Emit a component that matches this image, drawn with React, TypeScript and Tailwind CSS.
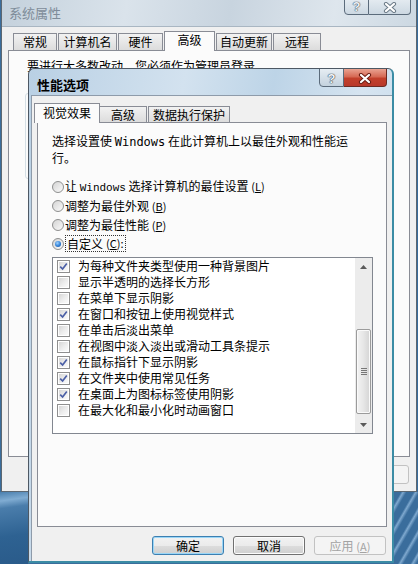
import React from "react";

const items: [string, boolean][] = [
  ["为每种文件夹类型使用一种背景图片", true],
  ["显示半透明的选择长方形", false],
  ["在菜单下显示阴影", false],
  ["在窗口和按钮上使用视觉样式", true],
  ["在单击后淡出菜单", false],
  ["在视图中淡入淡出或滑动工具条提示", false],
  ["在鼠标指针下显示阴影", true],
  ["在文件夹中使用常见任务", true],
  ["在桌面上为图标标签使用阴影", true],
  ["在最大化和最小化时动画窗口", false],
];

function Check({ checked }: { checked: boolean }) {
  return (
    <span className="w-[13px] h-[13px] border border-[#8f8f8f] bg-white p-[1px] flex shrink-0">
      <span className="flex-1 bg-[linear-gradient(135deg,#d6d6d6_0%,#ececec_50%,#fbfbfb_100%)] flex items-center justify-center">
        {checked && (
          <svg width="9" height="9" viewBox="0 0 9 9">
            <path d="M1.2 4.6 L3.6 7 L7.8 1.6" fill="none" stroke="#4b5fa6" strokeWidth="1.7" />
          </svg>
        )}
      </span>
    </span>
  );
}

function Radio({ on }: { on?: boolean }) {
  return (
    <span className="w-[12px] h-[12px] rounded-full border border-[#8e8f8f] bg-[linear-gradient(135deg,#d4d4d4,#fafafa)] flex items-center justify-center shrink-0">
      {on && (
        <span className="w-[6px] h-[6px] rounded-full bg-[radial-gradient(circle_at_40%_35%,#9fd3ff_0%,#2f7fd6_55%,#1b4f99_100%)]" />
      )}
    </span>
  );
}

function Btn({ label, def, disabled }: { label: React.ReactNode; def?: boolean; disabled?: boolean }) {
  return (
    <div
      className={
        "w-[72px] h-[19px] shrink-0 rounded-[3px] border flex items-center justify-center text-[12px] leading-none " +
        (disabled
          ? "border-[#c2c2c2] bg-[#f4f4f4] text-[#a3a3a3]"
          : def
          ? "border-[#3c7fb1] bg-[linear-gradient(#f2f2f2_0%,#ebebeb_50%,#dddddd_51%,#cfcfcf_100%)] shadow-[inset_0_0_0_1px_#9ad6f7] text-black"
          : "border-[#707070] bg-[linear-gradient(#f2f2f2_0%,#ebebeb_50%,#dddddd_51%,#cfcfcf_100%)] shadow-[inset_0_0_0_1px_#fcfcfc] text-black")
      }
    >
      {label}
    </div>
  );
}

function XGlyph({ stroke }: { stroke: string }) {
  return (
    <svg width="14" height="11" viewBox="0 0 14 11">
      <path d="M3 2 L11 9 M11 2 L3 9" stroke={stroke} strokeWidth="4.2" strokeLinecap="round" fill="none" />
      <path d="M3 2 L11 9 M11 2 L3 9" stroke="#ffffff" strokeWidth="2.2" strokeLinecap="round" fill="none" />
    </svg>
  );
}

function OuterWindow() {
  const tabs: [string, number, boolean][] = [
    ["常规", 44, false],
    ["计算机名", 59, false],
    ["硬件", 45, false],
    ["高级", 51, true],
    ["自动更新", 56, false],
    ["远程", 48, false],
  ];
  return (
    <div className="absolute left-[1px] top-0 w-[416px] h-[492px] overflow-hidden border border-t-0 border-[#5c6771] bg-[#f0f0f0] flex flex-col">
      <div className="h-[27px] shrink-0 bg-[linear-gradient(100deg,#c4d1dc_0%,#dae3eb_30%,#c8d4df_55%,#dee6ed_80%,#ccd8e2_100%)] pl-[7px] pt-[5px] text-[13px] leading-[16px] text-[#7e8c99] border-b border-[#a9b6c2]">
        系统属性
      </div>
      <div className="flex flex-col pl-[6px] pr-[6px] pt-[4px]">
        <div className="flex items-end h-[19px] ml-[5px] gap-[1px]">
          {tabs.map(([t, w, sel]) => (
            <div
              key={t}
              style={{ width: w }}
              className={
                "flex items-center justify-center text-[12px] leading-none border border-[#898c95] " +
                (sel
                  ? "h-[20px] mb-[-1px] border-b-0 bg-[#fbfbfb] relative z-10 pb-[3px]"
                  : "h-[17px] border-b-0 bg-[linear-gradient(#f2f2f2,#dcdcdc)]")
              }
            >
              {t}
            </div>
          ))}
        </div>
        <div className="h-[407px] shrink-0 border border-[#898c95] bg-[#fbfbfb] flex flex-col pl-[16px] pr-[16px] pt-[8px]">
          <div className="text-[12px] leading-[14px] pl-[2px]">要进行大多数改动，您必须作为管理员登录。</div>
          <div className="mt-[20px] h-[86px] rounded-[3px] border border-[#d5dfe5]" />
        </div>
        <div className="mt-[8px] flex justify-end gap-[8px] pr-[1px]">
          <Btn label="确定" />
          <Btn label="取消" />
          <Btn label="应用(A)" disabled />
        </div>
      </div>
      <div className="absolute right-[5px] top-[-4px] flex">
        <div className="w-[25px] h-[19px] rounded-bl-[4px] border border-[#5b6b7b] bg-[linear-gradient(#e8eef3,#ccd8e2)] flex items-center justify-center pt-[2px] text-[13px] font-bold font-['Liberation_Sans',sans-serif] text-[#e9eef2] [text-shadow:0_0_1px_#4b5966,0_0_1px_#4b5966,0_0_1px_#4b5966]">
          ?
        </div>
        <div className="w-[42px] h-[19px] rounded-br-[4px] border border-l-0 border-[#5b6b7b] bg-[linear-gradient(#e8eef3,#ccd8e2)] flex items-center justify-center pt-[3px]">
          <XGlyph stroke="#6c7b88" />
        </div>
      </div>
    </div>
  );
}

function InnerDialog() {
  return (
    <div className="absolute left-[28px] top-[68px] w-[366px] h-[495px] overflow-hidden rounded-t-[6px] border border-[#4d5864] border-r-[#3b8ca5] border-b-[#3b8ca5] border-r-2 border-b-2 bg-[linear-gradient(100deg,#b9d0e4_0%,#d3e2ef_35%,#bdd4e7_55%,#d6e4f0_75%,#c3d8ea_100%)] flex flex-col">
      <div className="h-[26px] shrink-0 pl-[8px] pt-[4px] flex items-center text-[13px] font-bold leading-none">
        性能选项
      </div>
      <div className="flex-1 ml-[2px] border-l border-t border-[#8e9baa] bg-[#f0f0f0] flex flex-col pl-[5px] pr-[5px] pt-[7px]">
        <div className="flex items-end h-[19px] shrink-0 ml-[-3px]">
          <div className="w-[66px] h-[20px] mb-[-1px] relative z-10 border border-b-0 border-[#898c95] bg-[#fbfbfb] flex items-center justify-center pb-[2px] text-[12px] leading-none">
            视觉效果
          </div>
          <div className="w-[47px] h-[16px] border border-l-0 border-b-0 border-[#898c95] bg-[linear-gradient(#f2f2f2,#dcdcdc)] flex items-center justify-center text-[12px] leading-none">
            高级
          </div>
          <div className="ml-[1px] w-[82px] h-[16px] border border-b-0 border-[#898c95] bg-[linear-gradient(#f2f2f2,#dcdcdc)] flex items-center justify-center text-[12px] leading-none">
            数据执行保护
          </div>
        </div>
        <div className="h-[405px] shrink-0 border border-[#898c95] bg-[#fbfbfb] flex flex-col pl-[14px] pr-[13px] pt-[10px]">
          <div className="text-[12px] leading-[15px]">
            选择设置使 <span className="font-['DejaVu_Sans_Mono',monospace] text-[12px]">Windows</span> 在此计算机上以最佳外观和性能运
            <br />
            行。
          </div>
          <div className="mt-[12px] flex flex-col text-[12px]">
            <div className="h-[19px] flex items-center gap-[1px]">
              <Radio />
              <span className="leading-none">
                让 <span className="font-['Liberation_Mono',monospace] text-[11px]">Windows</span> 选择计算机的最佳设置{" "}
                <span className="text-[11px]">
                  (<u>L</u>)
                </span>
              </span>
            </div>
            <div className="h-[19px] flex items-center gap-[1px]">
              <Radio />
              <span className="leading-none">
                调整为最佳外观{" "}
                <span className="text-[11px]">
                  (<u>B</u>)
                </span>
              </span>
            </div>
            <div className="h-[19px] flex items-center gap-[1px]">
              <Radio />
              <span className="leading-none">
                调整为最佳性能{" "}
                <span className="text-[11px]">
                  (<u>P</u>)
                </span>
              </span>
            </div>
            <div className="h-[19px] flex items-center gap-[1px]">
              <Radio on />
              <span className="h-[17px] px-[1px] border border-dotted border-[#333] flex items-center leading-none">
                自定义{" "}
                <span className="text-[11px] ml-[3px]">
                  (<u>C</u>):
                </span>
              </span>
            </div>
          </div>
          <div className="mt-[4px] h-[177px] shrink-0 border border-[#828790] bg-white flex">
            <div className="flex-1 flex flex-col">
              {items.map(([t, c]) => (
                <div key={t} className="h-[16px] shrink-0 flex items-center pl-[4px] gap-[8px] text-[12px] leading-none">
                  <Check checked={c} />
                  <span>{t}</span>
                </div>
              ))}
            </div>
            <div className="w-[17px] h-[175px] bg-[#ececec] flex flex-col">
              <div className="h-[17px] shrink-0 flex items-center justify-center">
                <svg width="7" height="4" viewBox="0 0 7 4">
                  <path d="M0 4 L3.5 0 L7 4 Z" fill="#5a5a5a" />
                </svg>
              </div>
              <div className="h-[141px] shrink-0 flex flex-col justify-end pb-[2px] px-[1px]">
                <div className="h-[85px] shrink-0 rounded-[2px] border border-[#9b9b9b] bg-[linear-gradient(90deg,#f3f3f3,#e6e6e6_50%,#d4d4d4)] shadow-[inset_0_0_0_1px_#fafafa] flex flex-col items-center justify-center gap-[1px]">
                  <span className="w-[6px] h-[1px] bg-[#777]" />
                  <span className="w-[6px] h-[1px] bg-[#777]" />
                  <span className="w-[6px] h-[1px] bg-[#777]" />
                  <span className="w-[6px] h-[1px] bg-[#777]" />
                </div>
              </div>
              <div className="h-[17px] shrink-0 flex items-center justify-center">
                <svg width="7" height="4" viewBox="0 0 7 4">
                  <path d="M0 0 L3.5 4 L7 0 Z" fill="#5a5a5a" />
                </svg>
              </div>
            </div>
          </div>
        </div>
        <div className="mt-[9px] flex justify-end gap-[9px] pr-[1px]">
          <Btn label="确定" def />
          <Btn label="取消" />
          <Btn
            label={
              <span>
                应用 <span className="text-[11px]">(<u>A</u>)</span>
              </span>
            }
            disabled
          />
        </div>
      </div>
      <div className="absolute right-[5px] top-[-1px] flex">
        <div className="w-[25px] h-[19px] rounded-bl-[4px] border border-[#5b6b7b] bg-[linear-gradient(#e6edf3,#c4d2de)] flex items-center justify-center pt-[2px] text-[13px] font-bold font-['Liberation_Sans',sans-serif] text-[#f2f5f8] [text-shadow:0_0_1px_#3b4855,0_0_1px_#3b4855,0_0_1px_#3b4855]">
          ?
        </div>
        <div className="w-[43px] h-[19px] rounded-br-[4px] border border-l-0 border-[#6b2a22] bg-[linear-gradient(#e9a391_0%,#d66a55_45%,#c2402b_55%,#b8382a_100%)] flex items-center justify-center pt-[2px]">
          <XGlyph stroke="#6b1e14" />
        </div>
      </div>
    </div>
  );
}

export default function App() {
  return (
    <div className="relative w-[418px] h-[564px] overflow-hidden bg-[#3a6d9c] font-['Noto_Sans_CJK_SC',sans-serif] text-[12px] text-black">
      <OuterWindow />
      <InnerDialog />
      <div className="absolute left-0 top-[492px] w-[28px] h-[72px] bg-[linear-gradient(172deg,#4a7fae_0%,#80acd2_12%,#4a7dab_22%,#2e6292_60%,#2a5b8a_100%)]" />
      <div className="absolute left-[394px] top-[492px] w-[24px] h-[72px] bg-[repeating-linear-gradient(120deg,#3a6d9c_0px,#3a6d9c_6px,#7fa9cf_8px,#3a6d9c_11px)]" />
    </div>
  );
}
